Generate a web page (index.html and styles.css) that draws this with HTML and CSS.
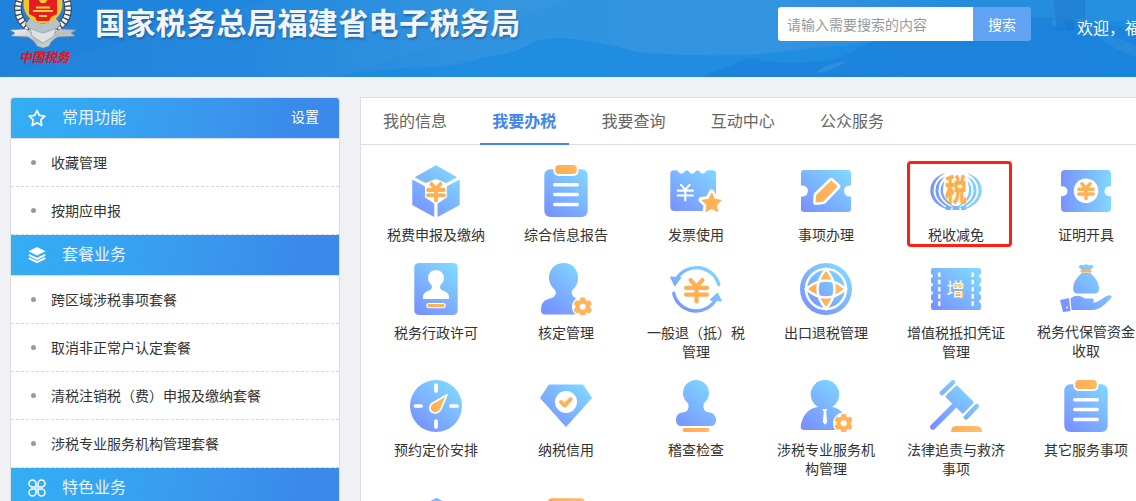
FILE: index.html
```html
<!DOCTYPE html>
<html lang="zh-CN">
<head>
<meta charset="utf-8">
<title>国家税务总局福建省电子税务局</title>
<link rel="stylesheet" href="styles.css">
</head>
<body>
<svg class="defs" width="0" height="0" aria-hidden="true">
  <defs>
    <linearGradient id="b" gradientUnits="userSpaceOnUse" x1="8" y1="48" x2="44" y2="4"><stop offset="0" stop-color="#7893ff"/><stop offset="1" stop-color="#80d8ff"/></linearGradient>
    <linearGradient id="bh" gradientUnits="userSpaceOnUse" x1="1" y1="0" x2="51" y2="0"><stop offset="0" stop-color="#7893ff"/><stop offset="1" stop-color="#80d8ff"/></linearGradient>
    <linearGradient id="o" gradientUnits="userSpaceOnUse" x1="12" y1="0" x2="50" y2="0"><stop offset="0" stop-color="#ffad4c"/><stop offset="1" stop-color="#ffbe70"/></linearGradient>
    <linearGradient id="silver" x1="0" y1="0" x2="1" y2="1"><stop offset="0" stop-color="#f5f5f5"/><stop offset=".5" stop-color="#b9bcc0"/><stop offset="1" stop-color="#e8e8e8"/></linearGradient>
    <symbol id="yuan" viewBox="0 0 20 20"><path d="M5.5 2 10 7l4.5-5M2 8h16M2 13.2h16M10 7v11.5" fill="none" stroke="currentColor" stroke-linecap="round" stroke-linejoin="round"/></symbol>
    <symbol id="gear" viewBox="-10 -10 20 20"><circle r="10" fill="#fff"/><g fill="#ffb45b"><circle r="6.8"/><rect x="-2.4" y="-8.7" width="4.8" height="17.4" rx="1.3"/><rect x="-2.4" y="-8.7" width="4.8" height="17.4" rx="1.3" transform="rotate(60)"/><rect x="-2.4" y="-8.7" width="4.8" height="17.4" rx="1.3" transform="rotate(120)"/></g><circle r="2.8" fill="#fff"/></symbol>
    <symbol id="clipboard" viewBox="0 0 52 52"><rect x="4.3" y="4.3" width="43.4" height="47.6" rx="6" fill="url(#b)"/><rect x="13.5" y="-2" width="25" height="12.9" rx="5" fill="#fff"/><rect x="15.3" y="0" width="21.5" height="9" rx="3.5" fill="url(#o)"/><path d="M14.7 19.7h22.6M14.7 29.6h22.6M14.7 39.4h22.6" stroke="#fff" stroke-width="3.5" stroke-linecap="round"/></symbol>
  </defs>
</svg>

<header class="top">
  <svg class="scenery" width="1136" height="77" viewBox="0 0 1136 77" aria-hidden="true">
    <path d="M270 0 0 77h340l230-77z" fill="#fff" opacity=".02"/>
    <path d="M355 73q45-5 80-6 30-3 50-10 35-4 50-16l22-3q35 1 80 14 60 5 110 3l100-10 120-17 169-8v57H335z" fill="#188ae0" opacity=".7"/>
    <path d="M750 58q40 10 90 0 40-25 90-32 12-5 35-7l95-2 76 12v48H700z" fill="#1b7ed8" opacity=".6"/>
    <path d="M1052 25l2-18-4-7h36l-3 9 1 16 52 20v12q-26-8-48-30l-12-7-10 1v8z" fill="#3b93df" opacity=".4"/>
    <path d="M1053 0h32v9l-1 10h-10v11h-17z" fill="#1673ca" opacity=".5"/>
    <path d="M816 73q8-9 31-12-10 7-20 10z" fill="#489fe5" opacity=".4"/>
  </svg>
  <div class="brand">
    <div class="emblem">
      <svg width="68" height="50" viewBox="0 0 68 50" aria-hidden="true">
        <g fill="none" stroke="#3d4852" stroke-width="7.5"><path d="M11-2q-8 22 15 34M57-2q8 22-15 34"/></g>
        <g fill="none" stroke="#f2f2f2" stroke-width="5.5" stroke-dasharray="3 1.4"><path d="M11-2q-8 22 15 34M57-2q8 22-15 34"/></g>
        <path d="M22 17q12 13 24 0l6 7q-8 11-18 12-10-1-18-12z" fill="#b7c3ca" stroke="#66717a"/>
        <circle cx="34" cy="4" r="19.500" fill="#f5c32c"/>
        <path d="M20-8h28v22l-6 3-2 4H28l-2-4-6-3z" fill="#e51c23"/>
        <path d="M24 11h20M27 7.500h14M30 16h8" stroke="#ffd237" stroke-width="2"/>
        <path d="m29-1 3 4h4l3-4z" fill="#ffd237"/>
        <path d="m1 30 5 3-4 3 17 1q7 4 9 9l6 2 6-2q2-6 9-9l17-1-4-3 5-3-16-1q-10 7-17 13-7-6-17-13z" fill="url(#silver)" stroke="#8b9298" stroke-width=".7"/>
        <path d="M21 28q8 4 13 5 5-1 13-5l-2 8-11 7-11-7z" fill="#dfe2e5" stroke="#8b9298" stroke-width=".6"/>
      </svg>
      <span class="seal">中国税务</span>
    </div>
    <h1 class="title">国家税务总局福建省电子税务局</h1>
  </div>
  <div class="search"><input class="query" placeholder="请输入需要搜索的内容"><button class="go">搜索</button></div>
  <div class="welcome">欢迎，福</div>
</header>

<div class="content">
  <aside class="side">
    <h2 class="head"><svg class="hi" width="20" height="20" viewBox="0 0 20 20"><path d="m10 2.400 2.300 5 5.500.7-4 3.800 1 5.500-4.800-2.700-4.800 2.700 1-5.500-4-3.800 5.500-.7z" fill="none" stroke="#fff" stroke-width="1.700" stroke-linejoin="round"/></svg><span>常用功能</span><a class="set">设置</a></h2>
    <ul class="list"><li>收藏管理</li><li>按期应申报</li></ul>
    <h2 class="head"><svg class="hi" width="20" height="20" viewBox="0 0 20 20"><path d="m10 2 8.600 4.200L10 10.600 1.400 6.200z" fill="#fff"/><path d="m1.800 9.800 8.200 4.100 8.200-4.100M1.800 13.100l8.200 4.100 8.200-4.100" fill="none" stroke="#fff" stroke-width="1.900"/></svg><span>套餐业务</span></h2>
    <ul class="list"><li>跨区域涉税事项套餐</li><li>取消非正常户认定套餐</li><li>清税注销税（费）申报及缴纳套餐</li><li>涉税专业服务机构管理套餐</li></ul>
    <h2 class="head"><svg class="hi" width="20" height="20" viewBox="0 0 20 20"><path d="M9 9V5.500A3.500 3.500 0 1 0 5.500 9zM11 9V5.500A3.500 3.500 0 1 1 14.500 9zM9 11v3.500A3.500 3.500 0 1 1 5.500 11zM11 11v3.500A3.500 3.500 0 1 0 14.500 11z" fill="none" stroke="#fff" stroke-width="1.500"/></svg><span>特色业务</span></h2>
  </aside>

  <main class="panel">
    <nav class="tabs"><a>我的信息</a><a class="on">我要办税</a><a>我要查询</a><a>互动中心</a><a>公众服务</a></nav>
    <div class="grid">
      <a class="tile"><svg class="ic" viewBox="0 0 52 52"><g fill="url(#b)" stroke="url(#b)" stroke-linejoin="round"><path d="M25.900.8 46.300 12.300 36 17.600 25.900 13.300 15.800 17.600 5.500 12.300z"/><path d="M2.800 15.300 14.500 21.500V32.500L23.800 38.800V51.300L2.800 39.800zM49.200 15.300 37.300 21.500V32.500L28 38.800V51.300L49.200 39.800z"/></g><use href="#yuan" x="16" y="17" width="20" height="20" color="#ffb052" stroke-width="3.800"/></svg><span>税费申报及缴纳</span></a>
      <a class="tile"><svg class="ic" viewBox="0 0 52 52"><use href="#clipboard" width="52" height="52"/></svg><span>综合信息报告</span></a>
      <a class="tile"><svg class="ic" viewBox="0 0 52 52"><path d="M4 5.300h2q1.500 0 2.500 1.500 3 4 6 0 1-1.500 2.300-1.500t2.300 1.500q3 4 6 0 1-1.500 2.300-1.500t2.300 1.500q3 4 6 0 1-1.500 2.500-1.500h4.300q3.500 0 3.500 3.500V46H4.500Q.3 46 .3 41.500V9.500Q.3 5.300 4 5.300z" fill="url(#b)"/><use href="#yuan" x="5.800" y="17.500" width="19" height="20" color="#fff" stroke-width="2.200"/><path d="m41.700 27.200 3.200 6.500 7.300 1.100-5.300 5 1.300 7.200-6.500-3.400-6.400 3.400 1.200-7.200-5.300-5 7.300-1.100z" fill="#fff" stroke="#fff" stroke-width="5.500" stroke-linejoin="round"/><path d="m41.700 28.200 3 6.100 6.600 1-4.800 4.600 1.200 6.600-6-3.100-5.900 3.100 1.100-6.600-4.800-4.600 6.600-1z" fill="#ffb157" stroke="#ffb157" stroke-linejoin="round"/></svg><span>发票使用</span></a>
      <a class="tile"><svg class="ic" viewBox="0 0 52 52"><path d="M4 5h44q3 0 3 3v12.500h-1.500a5.500 5.500 0 0 0 0 11H51V44q0 3-3 3H4q-3 0-3-3V31.500h1.500a5.500 5.500 0 0 0 0-11H1V8q0-3 3-3z" fill="url(#b)"/><path d="m31.300 16 6 5.500L23.500 36 16 37l.7-7z" fill="#fff" stroke="#fff" stroke-width="6" stroke-linejoin="round"/><path d="m31.300 16 6 5.500L23.500 36 16 37l.7-7z" fill="url(#o)" stroke="url(#o)" stroke-linejoin="round"/></svg><span>事项办理</span></a>
      <a class="tile marked"><svg class="ic" viewBox="0 0 52 52"><g fill="url(#bh)"><path d="M15 8Q.3 13 .3 25.500.3 38 17 44.500h3Q3.500 37 3.500 25.500 3.500 15 15 8zM37 8q14.700 5 14.700 17.500 0 12.500-16.700 19h-3q16.500-7.500 16.500-19Q48.500 15 37 8z"/><path d="M15 11.500Q5.500 15.500 5.500 25.500q0 11.500 15 17.500h2.500Q8.500 36 8.500 25.500 8.500 17 15 11.500zM37 11.500q9.500 4 9.500 14 0 11.500-15 17.500h-2.500q14.500-7 14.500-17.500 0-8.500-6.500-14z"/><path d="M14.500 16q-4 4-4 10 0 9 12 15.500h2Q13 34 13 26q0-5.500 1.500-10zM37.500 16q4 4 4 10 0 9-12 15.500h-2Q39 34 39 26q0-5.500-1.500-10z"/><path d="M16 41h5v4h-5zM22.500 41h7v4h-7zM31 41h5v4h-5z"/></g><text class="shui" transform="translate(26 35.800) scale(1 1.370)" text-anchor="middle" fill="url(#o)">税</text></svg><span>税收减免</span></a>
      <a class="tile"><svg class="ic" viewBox="0 0 52 52"><path d="M5 5h42q4 0 4 4v12.200h-1.500a5 5 0 0 0 0 10H51V43q0 4-4 4H5q-4 0-4-4V31.200h1.500a5 5 0 0 0 0-10H1V9q0-4 4-4z" fill="url(#bh)"/><circle cx="26" cy="25.700" r="12.300" fill="#fff"/><use href="#yuan" x="17" y="17" width="18" height="18" color="#ffb157" stroke-width="3.900"/></svg><span>证明开具</span></a>

      <a class="tile"><svg class="ic" viewBox="0 0 52 52"><rect x="4.300" width="43.400" height="52" rx="4.500" fill="url(#b)"/><path d="M26 7a8 8 0 0 1 8 8c0 5-4 6-4 9 0 5 9 3 9 10v2H13v-2c0-7 9-5 9-10 0-3-4-4-4-9a8 8 0 0 1 8-8z" fill="#fff"/><rect x="16.300" y="40" width="19.400" height="5.300" rx="2.500" fill="#fff"/><rect x="17.300" y="41" width="17.400" height="3.300" rx="1.500" fill="url(#o)"/></svg><span>税务行政许可</span></a>
      <a class="tile"><svg class="ic" viewBox="0 0 52 52"><path d="M23.700 0C32 0 38 6 38 14.500c0 6-2 9-5.500 12.500-2 3 0 7 3.500 8 5 .7 10 3 10 9v7.500H5Q1 51.500 1 47C1 39 5 36.500 12 35c3.500-2 5-5 3-8-4-4-6-7-6-12.500C9 6 15.400 0 23.700 0z" fill="url(#b)"/><use href="#gear" x="32" y="33" width="21.600" height="21.600"/></svg><span>核定管理</span></a>
      <a class="tile"><svg class="ic" viewBox="0 0 52 52"><path d="M48.800 21.500A23.200 23.200 0 0 0 6.500 16M3.700 30.300A22.800 22.800 0 0 0 46 36" fill="none" stroke="url(#b)" stroke-width="3.400" stroke-linecap="round"/><path d="m.5 14 10.500.5L4.800 23zM51.500 38l-4-8-7.500 7z" fill="url(#b)" stroke="url(#b)" stroke-linejoin="round"/><use href="#yuan" x="13.500" y="14.500" width="26" height="26" color="#ffb052" stroke-width="3.300"/></svg><span>一般退（抵）税管理</span></a>
      <a class="tile"><svg class="ic" viewBox="0 0 52 52"><circle cx="26" cy="26" r="26" fill="url(#b)"/><path d="M26 6Q9 26 26 46 43 26 26 6zM6 26Q26 9 46 26 26 43 6 26z" fill="url(#o)"/><rect x="19" y="19" width="14" height="14" rx="3" fill="url(#b)"/><path d="M26 6Q9 26 26 46 43 26 26 6zM6 26Q26 9 46 26 26 43 6 26z" fill="none" stroke="#fff" stroke-width="2.500"/><circle cx="26" cy="26" r="20" fill="none" stroke="#fff" stroke-width="2.500"/></svg><span>出口退税管理</span></a>
      <a class="tile"><svg class="ic" viewBox="0 0 52 52"><rect x="1" y="5" width="50" height="42" rx="2" fill="url(#b)"/><path d="M.8 13v30M51.200 13v30" stroke="#fff" stroke-width="4" stroke-dasharray="0 8.500" stroke-linecap="round"/><path d="M9.300 9.500v34M42.700 9.500v34" stroke="#fff" stroke-width="2.300" stroke-dasharray="4.600 2.600"/><path d="M25.500 20h8.500v5.500h-8.500zM26 28h7.500v7H26z" fill="#ffb157"/><text class="zeng" x="25.500" y="33" text-anchor="middle" fill="#fff">增</text></svg><span>增值税抵扣凭证管理</span></a>
      <a class="tile raised"><svg class="ic" viewBox="0 0 52 52"><path d="M18.500 4q2-3.500 5-1.500 2.500-2.500 5 0 4-2 5 1.500l-4 3.500h-7zM22 9.800h8q9 8 9 15.500 0 5.200-5 5.200H18q-5 0-5-5.200 0-7.500 9-15.500z" fill="url(#b)"/><rect x="20.500" y="7" width="11" height="2.400" rx="1.200" fill="url(#o)"/><path d="M10.500 35.500c5-4 10-3 14 0h8q3 2 0 4h-7 9c6-1 9-6 15-7.200q3 .2 2 2C46 41 40 47 32 47H11.500z" fill="url(#b)"/><path d="m0 37 9-2 1.500 13-7.500 1z" fill="url(#b)"/><circle cx="7" cy="44.500" r="1" fill="#fff"/></svg><span>税务代保管资金收取</span></a>

      <a class="tile"><svg class="ic" viewBox="0 0 52 52"><circle cx="26" cy="26" r="26" fill="url(#b)"/><path d="M26 5v6M26 41v6M5.500 26H11M41 26h6" stroke="#fff" stroke-width="3.700" stroke-linecap="round"/><path d="M37 14.800 31 29c-2 4-6 5-9 3s-3-6 0-8.500z" fill="url(#o)" stroke="#fff" stroke-width="1.700" stroke-linejoin="round"/></svg><span>预约定价安排</span></a>
      <a class="tile"><svg class="ic" viewBox="0 0 52 52"><path d="M9 5h34l8.500 13L26 46.500.5 18z" fill="url(#b)" stroke="url(#b)" stroke-linejoin="round"/><circle cx="26" cy="22" r="11" fill="#fff"/><path d="m21 22 3.700 3.500 6-6.300" fill="none" stroke="#ffb157" stroke-width="4" stroke-linecap="round" stroke-linejoin="round"/></svg><span>纳税信用</span></a>
      <a class="tile"><svg class="ic" viewBox="0 0 52 52"><path d="M26 0a13 13 0 0 1 13 13c0 5-2 7-5 10.500-1.500 4 0 8 4 8.800 5 0 8 3 8 7.700 0 4-2 6-6 6H12c-4 0-6-2-6-6 0-4.700 3-7.700 8-7.700 4-.8 5.500-4.800 4-8.800C15 20 13 18 13 13A13 13 0 0 1 26 0z" fill="url(#b)"/><rect x="12.500" y="48" width="27" height="4" rx="2" fill="url(#o)"/></svg><span>稽查检查</span></a>
      <a class="tile"><svg class="ic" viewBox="0 0 52 52"><circle cx="25" cy="14.300" r="14.300" fill="url(#b)"/><path d="M18 26.700h14q7 1 13 9V50H4Q.7 50 .7 46.500 3 29.500 18 26.700z" fill="url(#b)"/><path d="M22.500 29h5l-1.300 3 1 10-2.200 2.800-2.200-2.800 1-10z" fill="#fff"/><use href="#gear" x="32.900" y="32.500" width="21.600" height="21.600"/></svg><span>涉税专业服务机构管理</span></a>
      <a class="tile"><svg class="ic" viewBox="0 0 52 52"><path d="M2.900 47 23 27" stroke="url(#b)" stroke-width="5.600" stroke-linecap="round"/><path d="m26.700 7 15.500 15.500-9.500 9.500L17 16.500z" fill="url(#b)" stroke="url(#b)" stroke-width="3" stroke-linejoin="round"/><path d="m12 13 11-10.700M36 37.300l10.700-11.100" stroke="url(#b)" stroke-width="4.600" stroke-linecap="round"/><path d="M21 52q0-6 5-6h21q5 0 5 6z" fill="url(#o)"/></svg><span>法律追责与救济事项</span></a>
      <a class="tile"><svg class="ic" viewBox="0 0 52 52"><use href="#clipboard" width="52" height="52"/></svg><span>其它服务事项</span></a>

      <a class="tile"><svg class="ic" viewBox="0 0 52 52"><path d="M26.500.8 48 12 26.500 24 5 12z" fill="#7fbaff"/></svg></a>
      <a class="tile"><svg class="ic" viewBox="0 0 52 52"><rect x="8.300" y="1.300" width="36" height="46" rx="3" fill="url(#o)"/></svg></a>
    </div>
  </main>
</div>
</body>
</html>
```

FILE: styles.css
```css
* { box-sizing: border-box; }
body {
  display: flex;
  flex-direction: column;
  height: 501px;
  margin: 0;
  overflow: hidden;
  background: #f0f1f4;
  color: #333;
  font: 14px/19px "Noto Sans CJK SC", sans-serif;
}
.defs { position: absolute; }

.top {
  position: relative;
  display: flex;
  flex: none;
  height: 77px;
  overflow: hidden;
  background: linear-gradient(90deg, #1e81da 0, #2087de 22%, #3194e0 45%, #3395e2 67%, #258bdd 85%, #2590e2 100%);
}
.scenery { position: absolute; inset: 0; }
.brand { position: relative; display: flex; flex: none; width: 778px; padding-left: 9px; }
.emblem { flex: none; width: 70px; height: 70px; }
.emblem svg { display: block; }
.seal {
  display: block;
  margin: -2px 0 0 10px;
  color: #de1423;
  font: italic 700 13px/18px "Noto Sans CJK SC", sans-serif;
  letter-spacing: -.5px;
  white-space: nowrap;
}
.title {
  margin: 0 0 0 16px;
  color: #f3f5fa;
  font-size: 30px;
  line-height: 42px;
  font-weight: 700;
  letter-spacing: .4px;
  white-space: nowrap;
  text-shadow: 1px 2px 2px rgba(40, 70, 110, .5);
}
.search {
  position: relative;
  display: flex;
  flex: none;
  width: 253px;
  height: 34px;
  margin-top: 7px;
  border-radius: 3px;
  overflow: hidden;
}
.query {
  width: 195px;
  padding: 0 10px 0 9px;
  border: 0;
  background: #fff;
  font: inherit;
}
.query::placeholder { color: #999; opacity: 1; }
.go { flex: 1; padding: 0; border: 0; background: #62a2f2; color: #fff; font: inherit; }
.welcome {
  position: relative;
  flex: 1;
  min-width: 0;
  margin: 15px 0 0 46px;
  overflow: hidden;
  color: #fff;
  font-size: 16px;
  line-height: 24px;
  white-space: nowrap;
}

.content {
  display: flex;
  flex: 1;
  gap: 20px;
  min-height: 0;
  padding: 20px 0 0 10px;
  overflow: hidden;
}
.side {
  flex: none;
  width: 330px;
  border: 1px solid #dcdee2;
  border-bottom: 0;
  border-radius: 4px 4px 0 0;
  background: #fff;
  overflow: hidden;
}
.head {
  display: flex;
  align-items: center;
  height: 41px;
  margin: 0;
  padding: 0 20px 0 16px;
  border-bottom: 1px solid #d8e0ea;
  background: linear-gradient(100deg, #34aef4 0, #35a5f2 28%, #3a96ee 62%, #3b89e9 88%) padding-box;
  color: #e9f3fd;
  font-size: 16px;
  font-weight: 400;
}
.head span, .set { padding-bottom: 3px; }
.hi { margin-right: 15px; }
.set { margin-left: auto; font-size: 14px; color: #fff; }
.list { margin: 0; padding: 0; list-style: none; }
.list li {
  display: flex;
  align-items: center;
  gap: 15px;
  height: 48px;
  padding-left: 20px;
  border-bottom: 1px dashed #d6d8dc;
}
.list li::before { content: ""; width: 5px; height: 5px; border-radius: 50%; background: #999; }

.panel {
  flex: 1;
  min-width: 0;
  border: 1px solid #dcdee2;
  border-width: 1px 0 0 1px;
  background: #fff;
  overflow: hidden;
}
.tabs {
  display: flex;
  gap: 20.25px;
  height: 47px;
  padding-left: 9.7px;
  border-bottom: 1px solid #dcdee2;
}
.tabs a {
  height: 47px;
  padding: 0 12.7px 0 12.3px;
  color: #666;
  font-size: 16px;
  line-height: 45px;
}
.tabs .on { border-bottom: 2px solid #4285ec; color: #4285ec; font-weight: 700; }
.grid {
  display: grid;
  grid-template-columns: repeat(6, 130px);
  row-gap: 19px;
  padding: 20px 0 0 10px;
}
.tile {
  position: relative;
  display: flex;
  flex-direction: column;
  align-items: center;
  gap: 8px;
  text-align: center;
}
.tile span { width: 102px; }
.raised span { margin-top: -1px; }
.ic { display: block; width: 52px; height: 52px; overflow: hidden; }
.marked::after {
  content: "";
  box-sizing: border-box;
  position: absolute;
  left: 16px;
  top: -4px;
  width: 105px;
  height: 86px;
  border: 3px solid #ff2014;
  border-radius: 4px;
}
.shui { font: 900 22px "Noto Sans CJK SC", sans-serif; }
.zeng { font: 400 18px "Noto Sans CJK SC", sans-serif; }
```
